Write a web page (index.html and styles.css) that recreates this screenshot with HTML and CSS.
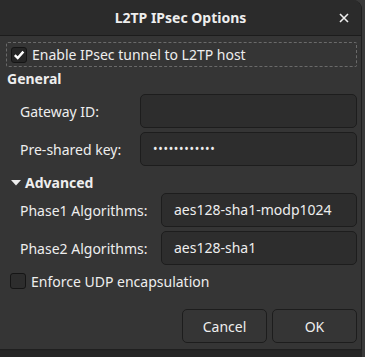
FILE: index.html
```html
<!DOCTYPE html>
<html lang="en">
<head>
    <meta charset="UTF-8">
    <title>L2TP IPsec Options</title>
    <link rel="stylesheet" href="styles.css">
</head>
<body>
    <div class="dialog">
        <div class="headerbar">
            <span class="title">L2TP IPsec Options</span>
            <svg class="close" width="10" height="10" viewBox="0 0 10 10"><path d="M1 1 L9 9 M9 1 L1 9" stroke="#eee" stroke-width="1.6"/></svg>
        </div>
        <div class="content">
            <label class="check focused">
                <span class="box checked">
                    <svg width="12" height="12" viewBox="0 0 12 12"><path d="M1.8 6.2 L4.7 9 L10.4 2.6" fill="none" stroke="#fff" stroke-width="2.4"/></svg>
                </span>
                Enable IPsec tunnel to L2TP host
            </label>

            <div class="section">General</div>
            <div class="form-grid general">
                <label>Gateway ID:</label>
                <div class="entry"></div>
                <label>Pre-shared key:</label>
                <div class="entry dots">&#x2022;&#x2022;&#x2022;&#x2022;&#x2022;&#x2022;&#x2022;&#x2022;&#x2022;&#x2022;&#x2022;&#x2022;</div>
            </div>

            <div class="section expander">
                <svg width="10" height="6" viewBox="0 0 10 6"><path d="M0 0 H10 L5 5.5 Z" fill="#eee"/></svg>
                Advanced
            </div>
            <div class="form-grid advanced">
                <label>Phase1 Algorithms:</label>
                <div class="entry">aes128-sha1-modp1024</div>
                <label>Phase2 Algorithms:</label>
                <div class="entry">aes128-sha1</div>
            </div>

            <label class="check plain">
                <span class="box"></span>
                Enforce UDP encapsulation
            </label>

            <div class="buttons">
                <button>Cancel</button>
                <button>OK</button>
            </div>
        </div>
    </div>
</body>
</html>
```

FILE: styles.css
```css
body {
    margin: 0;
    width: 365px;
    height: 357px;
    background: #3a3a3a;
    font-family: "Noto Sans", "DejaVu Sans", sans-serif;
    font-size: 14px;
    color: #eeeeee;
    overflow: hidden;
}

.dialog {
    width: 361px;
    height: 349px;
    background: #353535;
    border-right: 1px solid #1f1f1f;
    border-bottom: 1px solid #1f1f1f;
    border-radius: 0 9px 0 0;
    box-shadow: 0 1px 0 #242424, 0 8px 0 #262626;
    overflow: hidden;
}

/* Header */
.headerbar {
    height: 35px;
    background: #2b2b2b;
    border-bottom: 1px solid #1c1c1c;
    display: flex;
    align-items: center;
    justify-content: center;
    position: relative;
}

.title {
    font-weight: bold;
    font-size: 14px;
}

.close {
    position: absolute;
    right: 12px;
    top: 13px;
}

.content {
    padding: 6px 4px 0 6px;
}

/* Checkboxes */
.check {
    display: flex;
    align-items: center;
    gap: 5px;
    height: 24px;
    padding-left: 4px;
}

.check.focused {
    border: 1px dashed #6a6a6a;
    border-radius: 2px;
    height: 23px;
}

.box {
    width: 14px;
    height: 14px;
    border: 1px solid #151515;
    border-radius: 3px;
    background: #2d2d2d;
    display: flex;
    align-items: center;
    justify-content: center;
}

.box.checked {
    background: #262626;
}

.section {
    font-weight: bold;
    margin: 2px 0 0 1px;
    height: 20px;
    line-height: 20px;
}

.expander {
    display: flex;
    align-items: center;
    gap: 4px;
    margin-left: 5px;
}

/* Forms */
.form-grid {
    display: grid;
    row-gap: 4px;
    align-items: center;
    padding-left: 14px;
}

.general {
    grid-template-columns: 120px 217px;
    margin-top: 5px;
    margin-bottom: 7px;
}

.advanced {
    grid-template-columns: 141px 196px;
    margin-top: 0;
    margin-bottom: 4px;
}

.entry {
    height: 34px;
    line-height: 32px;
    background: #2d2d2d;
    border: 1px solid #1d1d1d;
    border-radius: 5px;
    padding: 0 12px;
    box-sizing: border-box;
}

.dots {
    font-size: 12px;
    letter-spacing: 0.7px;
}

/* Buttons */
.buttons {
    display: flex;
    justify-content: flex-end;
    gap: 5px;
    margin-top: 16px;
}

button {
    width: 85px;
    height: 34px;
    background: #353535;
    border: 1px solid #1d1d1d;
    border-radius: 5px;
    color: #eeeeee;
    font-family: inherit;
    font-size: 14px;
}
```
